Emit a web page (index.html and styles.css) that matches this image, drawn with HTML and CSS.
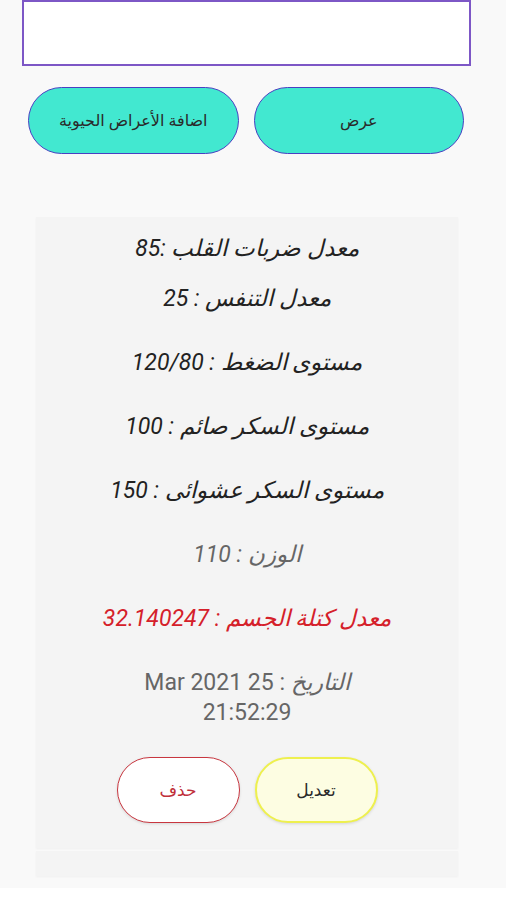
FILE: index.html
```html
<!doctype html>
<html dir="rtl" lang="ar">
  <head>
    <meta name="viewport" content="width=device-width, initial-scale=1">
    <link rel="stylesheet" href="styles.css">
    <title>الأعراض الحيوية</title>
  </head>
  <body>
    <div class="page">
      <div class="search"></div>

      <div class="actions">
        <button class="pill">عرض</button>
        <button class="pill">اضافة الأعراض الحيوية</button>
      </div>

      <div class="card">
        <p class="line first">معدل ضربات القلب :85</p>
        <p class="line second">معدل التنفس : 25</p>
        <p class="line">مستوى الضغط : 120/80</p>
        <p class="line">مستوى السكر صائم : 100</p>
        <p class="line">مستوى السكر عشوائى : 150</p>
        <p class="line muted">الوزن : 110</p>
        <p class="line alert">معدل كتلة الجسم : 32.140247</p>
        <p class="line date"><i>التاريخ</i> : 25 Mar 2021<br>21:52:29</p>
        <div class="card-actions">
          <button class="small edit">تعديل</button>
          <button class="small remove">حذف</button>
        </div>
      </div>

      <div class="card next"></div>
    </div>
    <div class="navbar"></div>
  </body>
</html>
```

FILE: styles.css
```css
html, body {
  margin: 0;
  padding: 0;
}
body {
  background: #f9f9f9;
  font-family: Roboto, "DejaVu Sans", sans-serif;
  color: #222222;
}
.page {
  height: 888px;
  overflow: hidden;
}
.search {
  box-sizing: border-box;
  height: 66px;
  margin: 0 35px 0 22px;
  background: #ffffff;
  border: 2px solid #7d57c6;
}
.actions {
  display: flex;
  gap: 15px;
  padding: 21px 42px 0 28px;
}
.pill {
  box-sizing: border-box;
  width: 211px;
  height: 67px;
  border-radius: 34px;
  background: #42e8d0;
  border: 1.5px solid #4a40c2;
  font-family: inherit;
  font-size: 16px;
  color: #2a2a2a;
  padding: 0;
}
.card {
  display: flex;
  flex-direction: column;
  align-items: center;
  gap: 34px;
  margin: 63px 48px 0 36px;
  padding: 17px 0 25px;
  background: #f4f4f4;
  box-shadow: 0 1px 2px rgba(0, 0, 0, 0.04);
}
.line {
  margin: 0;
  font-size: 23px;
  line-height: 30px;
  font-style: italic;
  text-align: center;
}
.second {
  margin-top: -14px;
}
.muted {
  color: #666666;
}
.alert {
  color: #d5202a;
}
.date {
  font-style: normal;
  color: #666666;
  font-size: 23px;
}
.date i {
  font-style: italic;
}
.card-actions {
  display: flex;
  gap: 15px;
  margin-top: -5px;
}
.small {
  box-sizing: border-box;
  width: 123px;
  height: 66px;
  border-radius: 33px;
  font-family: inherit;
  font-size: 17px;
  padding: 0;
  box-shadow: 0 1px 3px rgba(0, 0, 0, 0.12);
}
.edit {
  background: #fdfde2;
  border: 2px solid #eef04e;
  color: #2a2a2a;
}
.remove {
  background: #ffffff;
  border: 1.5px solid #c8363f;
  color: #c0303a;
}
.card.next {
  margin-top: 3px;
  height: 25px;
  padding: 0;
}
.navbar {
  height: 12px;
  background: #ffffff;
}
```
